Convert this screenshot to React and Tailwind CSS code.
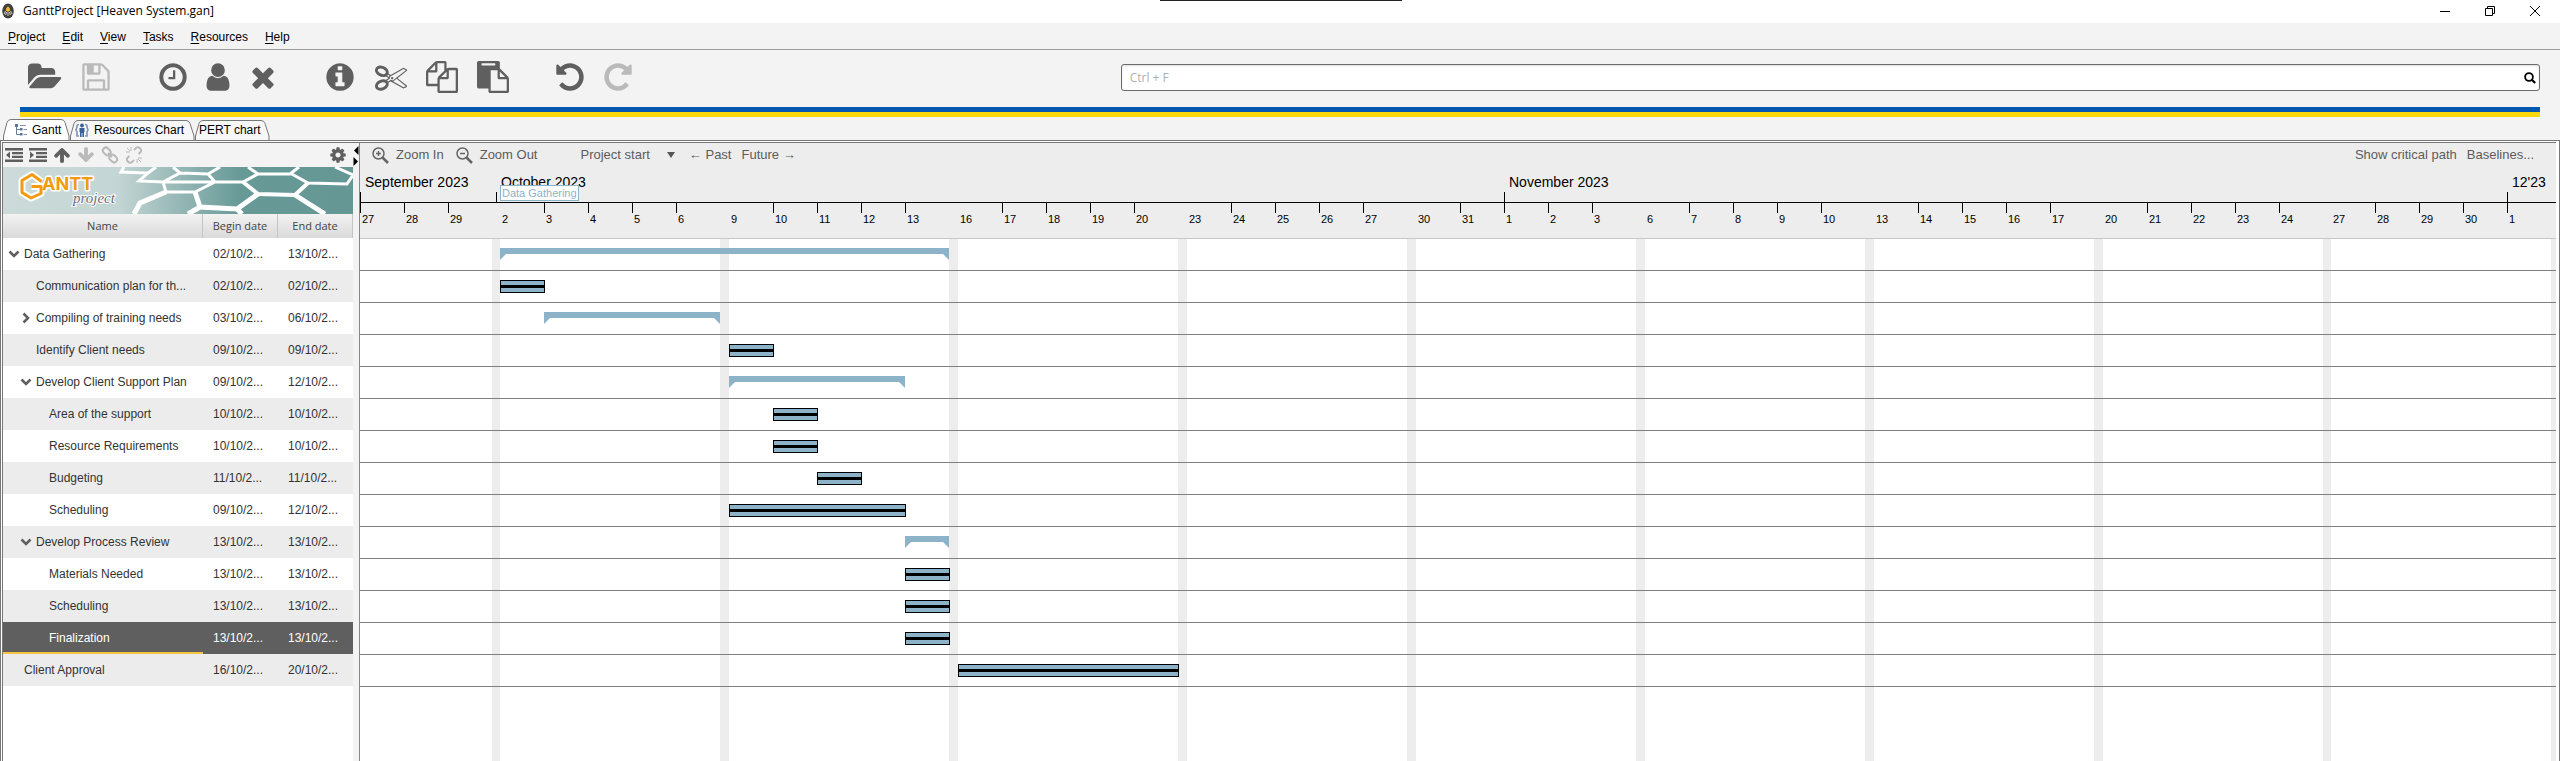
import React from "react";

const PATHS = {
  folder:
    "M1879 952q0 31-31 66l-336 396q-43 51-120.5 86.5t-143.5 35.5h-1088q-34 0-60.5-13t-26.5-43q0-31 31-66l336-396q43-51 120.5-86.5t143.5-35.5h1088q34 0 60.5 13t26.5 43zm-343-344v160h-832q-94 0-197 47.5t-164 119.5l-337 396-5 6q0-4-.5-12.5t-.5-12.5v-960q0-92 66-158t158-66h320q92 0 158 66t66 158v32h544q92 0 158 66t66 158z",
  save: "M512 1536h768v-384h-768v384zm896 0h128v-896q0-14-10-38.5t-20-34.5l-281-281q-10-10-34-20t-39-10v416q0 40-28 68t-68 28h-576q-40 0-68-28t-28-68v-416h-128v1280h128v-416q0-40 28-68t68-28h832q40 0 68 28t28 68v416zm-384-928v-320q0-13-9.5-22.5t-22.5-9.5h-192q-13 0-22.5 9.5t-9.5 22.5v320q0 13 9.5 22.5t22.5 9.5h192q13 0 22.5-9.5t9.5-22.5zm640 32v928q0 40-28 68t-68 28h-1344q-40 0-68-28t-28-68v-1344q0-40 28-68t68-28h928q40 0 88 20t76 48l280 280q28 28 48 76t20 88z",
  clock:
    "M1024 544v448q0 14-9 23t-23 9h-320q-14 0-23-9t-9-23v-64q0-14 9-23t23-9h224v-352q0-14 9-23t23-9h64q14 0 23 9t9 23zm416 352q0-148-73-273t-198-198-273-73-273 73-198 198-73 273 73 273 198 198 273 73 273-73 198-198 73-273zm224 0q0 209-103 385.5t-279.5 279.5-385.5 103-385.5-103-279.5-279.5-103-385.5 103-385.5 279.5-279.5 385.5-103 385.5 103 279.5 279.5 103 385.5z",
  user: "M1536 1399q0 109-62.5 187t-150.5 78h-854q-88 0-150.5-78t-62.5-187q0-85 8.5-160.5t31.5-152 58.5-131 94-89 134.5-34.5q131 128 313 128t313-128q76 0 134.5 34.5t94 89 58.5 131 31.5 152 8.5 160.5zm-256-887q0 159-112.5 271.5t-271.5 112.5-271.5-112.5-112.5-271.5 112.5-271.5 271.5-112.5 271.5 112.5 112.5 271.5z",
  times:
    "M1490 1322q0 40-28 68l-136 136q-28 28-68 28t-68-28l-294-294-294 294q-28 28-68 28t-68-28l-136-136q-28-28-28-68t28-68l294-294-294-294q-28-28-28-68t28-68l136-136q28-28 68-28t68 28l294 294 294-294q28-28 68-28t68 28l136 136q28 28 28 68t-28 68l-294 294 294 294q28 28 28 68z",
  info: "M1152 1376v-160q0-14-9-23t-23-9h-96v-512q0-14-9-23t-23-9h-320q-14 0-23 9t-9 23v160q0 14 9 23t23 9h96v320h-96q-14 0-23 9t-9 23v160q0 14 9 23t23 9h448q14 0 23-9t9-23zm-128-896v-160q0-14-9-23t-23-9h-192q-14 0-23 9t-9 23v160q0 14 9 23t23 9h192q14 0 23-9t9-23zm640 416q0 209-103 385.5t-279.5 279.5-385.5 103-385.5-103-279.5-279.5-103-385.5 103-385.5 279.5-279.5 385.5-103 385.5 103 279.5 279.5 103 385.5z",
  cut: "M960 896q26 0 45 19t19 45-19 45-45 19-45-19-19-45 19-45 45-19zm300 64l507 398q28 20 25 56-5 35-35 51l-128 64q-13 7-29 7-17 0-31-8l-690-387-110 66q-8 4-12 5 14 49 10 97-7 77-56 147.5t-132 123.5q-132 84-277 84-136 0-222-78-90-84-79-207 7-76 56-147t131-124q132-84 278-84 83 0 151 31 9-13 22-22l122-73-122-73q-13-9-22-22-68 31-151 31-146 0-278-84-82-53-131-124t-56-147q-5-59 15.5-113t63.5-93q85-79 222-79 145 0 277 84 83 52 132 123t56 148q4 48-10 97 4 1 12 5l110 66 690-387q14-8 31-8 16 0 29 7l128 64q30 16 35 51 3 36-25 56zm-681-260q46-42 21-108t-106-117q-92-59-192-59-74 0-113 36-46 42-21 108t106 117q92 59 192 59 74 0 113-36zm-85 745q81-51 106-117t-21-108q-39-36-113-36-100 0-192 59-81 51-106 117t21 108q39 36 113 36 100 0 192-59zm178-613l96 58v-11q0-36 33-56l14-8-79-44-26 26q-3 3-10 11t-12 12q-2 2-4 3.5t-3 2.5zm224 224l96 32 736-576-128-64-768 431v113l-160 96 9 8q2 2 7 6 4 4 11 12t11 12l26 26zm704 416l128-64-520-408-177 138q-2 3-13 7z",
  copy: "M1696 384q40 0 68 28t28 68v1216q0 40-28 68t-68 28h-960q-40 0-68-28t-28-68v-288h-544q-40 0-68-28t-28-68v-672q0-40 20-88t48-76l408-408q28-28 76-48t88-20h416q40 0 68 28t28 68v328q68-40 128-40h416zm-544 213l-299 299h299v-299zm-640-384l-299 299h299v-299zm196 647l316-316v-416h-384v416q0 40-28 68t-68 28h-416v640h512v-256q0-40 20-88t48-76zm956 804v-1152h-384v416q0 40-28 68t-68 28h-416v640h896z",
  paste:
    "M768 1664h896v-640h-416q-40 0-68-28t-28-68v-416h-384v1152zm256-1440v-64q0-13-9.5-22.5t-22.5-9.5h-704q-13 0-22.5 9.5t-9.5 22.5v64q0 13 9.5 22.5t22.5 9.5h704q13 0 22.5-9.5t9.5-22.5zm256 672h299l-299-299v299zm512 128v672q0 40-28 68t-68 28h-960q-40 0-68-28t-28-68v-160h-544q-40 0-68-28t-28-68v-1344q0-40 28-68t68-28h1088q40 0 68 28t28 68v328q21 13 36 28l408 408q28 28 48 76t20 88z",
  undo: "M1664 896q0 156-61 298t-164 245-245 164-298 61q-172 0-327-72.5t-264-204.5q-7-10-6.5-22.5t8.5-20.5l137-138q10-9 25-9 16 2 23 12 73 95 179 147t225 52q104 0 198.5-40.5t163.5-109.5 109.5-163.5 40.5-198.5-40.5-198.5-109.5-163.5-163.5-109.5-198.5-40.5q-98 0-188 35.5t-160 101.5l137 138q31 30 14 69-17 40-59 40h-448q-26 0-45-19t-19-45v-448q0-42 40-59 39-17 69 14l130 129q107-101 244.5-156.5t284.5-55.5q156 0 298 61t245 164 164 245 61 298z",
  up: "M1675 971q0 51-37 90l-75 75q-38 38-91 38-54 0-90-38l-294-293v704q0 52-37.5 84.5t-90.5 32.5h-128q-53 0-90.5-32.5t-37.5-84.5v-704l-294 293q-36 38-90 38t-90-38l-75-75q-38-38-38-90 0-53 38-91l651-651q35-37 90-37 54 0 91 37l651 651q37 39 37 91z",
  cog: "M1152 896q0-106-75-181t-181-75-181 75-75 181 75 181 181 75 181-75 75-181zm512-109v222q0 12-8 23t-20 13l-185 28q-19 54-39 91 35 50 107 138 10 12 10 25t-9 23q-27 37-99 108t-94 71q-12 0-26-9l-138-108q-44 23-91 38-16 136-29 186-7 28-36 28h-222q-14 0-24.5-8.5t-11.5-21.5l-28-184q-49-16-90-37l-141 107q-10 9-25 9-14 0-25-11-126-114-165-168-7-10-7-23 0-12 8-23 15-21 51-66.5t54-70.5q-27-50-41-99l-183-27q-13-2-21-12.5t-8-23.5v-222q0-12 8-23t19-13l186-28q14-46 39-92-40-57-107-138-10-12-10-24 0-10 9-23 26-36 98.5-107.5t94.5-71.5q13 0 26 10l138 107q44-23 91-38 16-136 29-186 7-28 36-28h222q14 0 24.5 8.5t11.5 21.5l28 184q49 16 90 37l142-107q9-9 24-9 13 0 25 10 129 119 165 170 7 8 7 22 0 12-8 23-15 21-51 66.5t-54 70.5q26 50 41 98l183 28q13 2 21 12.5t8 23.5z",
};

function Glyph({ name, className = "size-8", box = "0 0 1792 1792" }) {
  return (
    <svg viewBox={box} className={className} fill="currentColor" aria-hidden="true">
      <path d={PATHS[name]} />
    </svg>
  );
}

function IconButton({ label, muted, children }) {
  return (
    <button type="button" aria-label={label} className={muted ? "text-[#bababa]" : "text-[#5f5f5f]"}>
      {children}
    </button>
  );
}

/* ---------- calendar ---------- */

const DAY = 44;
const WEEKS = [
  { days: [27, 28, 29], rest: 8 },
  { days: [2, 3, 4, 5, 6], rest: 9 },
  { days: [9, 10, 11, 12, 13], rest: 9 },
  { days: [16, 17, 18, 19, 20], rest: 9 },
  { days: [23, 24, 25, 26, 27], rest: 9 },
  { days: [30, 31, 1, 2, 3], rest: 9 },
  { days: [6, 7, 8, 9, 10], rest: 9 },
  { days: [13, 14, 15, 16, 17], rest: 9 },
  { days: [20, 21, 22, 23, 24], rest: 8 },
  { days: [27, 28, 29, 30, 1], rest: 9 },
];
const MONTHS = [
  { name: "September 2023", width: 3 * DAY + 4 },
  { name: "October 2023", width: 4 + 22 * DAY + 4 * 9 },
  { name: "November 2023", width: 22 * DAY + 3 * 9 + 8 },
  { name: "12'23", width: 2 * DAY },
];

/* Left edge of a working day: week index and position within the week. */
function dayX(week, day) {
  let x = 0;
  for (let i = 0; i < week; i++) x += WEEKS[i].days.length * DAY + WEEKS[i].rest;
  return x + day * DAY;
}

const TASKS = [
  { name: "Data Gathering", level: 0, open: true, begin: "02/10/2...", end: "13/10/2...", group: true, from: [1, 0], to: [2, 5] },
  { name: "Communication plan for th...", level: 1, begin: "02/10/2...", end: "02/10/2...", from: [1, 0], to: [1, 1] },
  { name: "Compiling of training needs", level: 1, open: false, begin: "03/10/2...", end: "06/10/2...", group: true, from: [1, 1], to: [1, 5] },
  { name: "Identify Client needs", level: 1, begin: "09/10/2...", end: "09/10/2...", from: [2, 0], to: [2, 1] },
  { name: "Develop Client Support Plan", level: 1, open: true, begin: "09/10/2...", end: "12/10/2...", group: true, from: [2, 0], to: [2, 4] },
  { name: "Area of the support", level: 2, begin: "10/10/2...", end: "10/10/2...", from: [2, 1], to: [2, 2] },
  { name: "Resource Requirements", level: 2, begin: "10/10/2...", end: "10/10/2...", from: [2, 1], to: [2, 2] },
  { name: "Budgeting", level: 2, begin: "11/10/2...", end: "11/10/2...", from: [2, 2], to: [2, 3] },
  { name: "Scheduling", level: 2, begin: "09/10/2...", end: "12/10/2...", from: [2, 0], to: [2, 4] },
  { name: "Develop Process Review", level: 1, open: true, begin: "13/10/2...", end: "13/10/2...", group: true, from: [2, 4], to: [2, 5] },
  { name: "Materials Needed", level: 2, begin: "13/10/2...", end: "13/10/2...", from: [2, 4], to: [2, 5] },
  { name: "Scheduling", level: 2, begin: "13/10/2...", end: "13/10/2...", from: [2, 4], to: [2, 5] },
  { name: "Finalization", level: 2, selected: true, begin: "13/10/2...", end: "13/10/2...", from: [2, 4], to: [2, 5] },
  { name: "Client Approval", level: 0, begin: "16/10/2...", end: "20/10/2...", from: [3, 0], to: [3, 5] },
];

/* ---------- window frame ---------- */

function TitleBar() {
  return (
    <header className="relative flex h-[23px] items-center bg-white pb-px pl-0.5 pr-5">
      <div className="absolute left-[1160px] top-0 h-px w-[242px] bg-[#222]" />
      <svg viewBox="0 0 12 16" className="h-4 w-3" aria-hidden="true">
        <ellipse cx="6" cy="8" rx="5.8" ry="7.6" fill="#3f3f3f" />
        <path d="M6 3.2l2 2.2v2.2L6 9 4 7.6V5.4z" fill="#f2b92c" />
        <path d="M3.6 7.8L2 11.2M6 9.4v3.6M8.4 7.8l1.8 3.4M4.6 9l-1 3M7.4 9l1 3" stroke="#e8e3d0" strokeWidth="0.9" fill="none" />
      </svg>
      <h1 className="ml-[9px] font-['Open_Sans','Noto_Sans',sans-serif] text-xs leading-4 text-black">
        GanttProject [Heaven System.gan]
      </h1>
      <div className="ml-auto flex items-center gap-[35px]">
        <button type="button" aria-label="Minimize">
          <svg viewBox="0 0 10 10" className="size-2.5"><path d="M0 5.5h10" stroke="#000" /></svg>
        </button>
        <button type="button" aria-label="Restore">
          <svg viewBox="0 0 10 10" className="size-2.5" fill="none" stroke="#000">
            <path d="M.5 2.5h7v7h-7zM2.5 2.5v-2h7v7h-2" />
          </svg>
        </button>
        <button type="button" aria-label="Close">
          <svg viewBox="0 0 10 10" className="size-2.5"><path d="M0 0l10 10M10 0L0 10" stroke="#000" /></svg>
        </button>
      </div>
    </header>
  );
}

function MenuBar() {
  return (
    <nav className="flex h-[27px] items-center gap-[17px] border-b border-[#999] pl-2 pt-px text-xs text-black">
      {["Project", "Edit", "View", "Tasks", "Resources", "Help"].map((m) => (
        <button key={m} type="button">
          <span className="underline underline-offset-2">{m[0]}</span>
          {m.slice(1)}
        </button>
      ))}
    </nav>
  );
}

function Toolbar() {
  return (
    <div className="flex h-[57px] items-start justify-between pl-7 pr-5">
      <div className="flex gap-[45px] pt-[11px]">
        <div className="flex gap-[18px]">
          <IconButton label="Open"><Glyph name="folder" box="0 0 1920 1792" className="h-8 w-[34px]" /></IconButton>
          <IconButton label="Save" muted><Glyph name="save" /></IconButton>
        </div>
        <div className="flex gap-[13px]">
          <IconButton label="New task"><Glyph name="clock" /></IconButton>
          <IconButton label="New resource"><Glyph name="user" /></IconButton>
          <IconButton label="Delete"><Glyph name="times" /></IconButton>
        </div>
        <div className="flex gap-[19px]">
          <IconButton label="Properties"><Glyph name="info" /></IconButton>
          <IconButton label="Cut"><Glyph name="cut" /></IconButton>
          <IconButton label="Copy"><Glyph name="copy" /></IconButton>
          <IconButton label="Paste"><Glyph name="paste" /></IconButton>
        </div>
        <div className="flex gap-4">
          <IconButton label="Undo"><Glyph name="undo" /></IconButton>
          <IconButton label="Redo" muted><Glyph name="undo" className="size-8 -scale-x-100" /></IconButton>
        </div>
      </div>
      <label className="mt-3.5 flex h-[27px] w-[56.5%] items-center rounded-[3px] border border-[#6b6b6b] bg-white pl-2 pr-[3px] shadow-[inset_0_1px_2px_#ddd]">
        <input
          type="search"
          aria-label="Search"
          placeholder="Ctrl + F"
          className="min-w-0 flex-1 bg-transparent font-['Open_Sans','Noto_Sans',sans-serif] text-xs outline-none placeholder:text-[#b0b0b0]"
        />
        <svg viewBox="0 0 12 12" className="size-3" fill="none" stroke="#000" strokeWidth="1.8" aria-hidden="true">
          <circle cx="5" cy="5" r="3.9" />
          <path d="M7.8 7.8l3.4 3.2" strokeWidth="2.2" />
        </svg>
      </label>
    </div>
  );
}

function Tab({ width, label, active, icon, className }) {
  const top = active ? 0.5 : 1.5;
  return (
    <button type="button" role="tab" aria-selected={!!active} className={"relative flex h-[21px] items-center text-xs text-black " + className}>
      <svg viewBox={`0 0 ${width} 21`} preserveAspectRatio="none" className="absolute inset-0 size-full" aria-hidden="true">
        <path
          d={`M.5 21V17L4 ${top + 3}Q5 ${top} 8 ${top}H${width - 9}Q${width - 6} ${top} ${width - 5} ${top + 3}L${width - 1} 17V21`}
          fill={active ? "#fff" : "#f7f7f7"}
          stroke="#777"
        />
      </svg>
      <span className="relative flex items-center gap-[5px]">
        {icon}
        {label}
      </span>
    </button>
  );
}

function Tabs() {
  return (
    <div role="tablist" className="flex items-end pl-[3px] pt-0.5">
      <Tab
        width={67}
        label="Gantt"
        active
        className="w-[67px] pl-3"
        icon={
          <svg viewBox="0 0 12 12" className="size-3" aria-hidden="true">
            <path d="M1.5 3v7.5h4M1.5 5.5h4" stroke="#6a7f9c" fill="none" />
            <path d="M0 0h3v3H0zM5 4h2.500v2.500H5zM5 9h2.500v2.500H5z" fill="#56779f" />
            <path d="M5 1.500h6M8.500 5.500H12M8.500 10.500H12" stroke="#8293a8" />
          </svg>
        }
      />
      <Tab
        width={125}
        label="Resources Chart"
        className="w-[125px] pl-[5px]"
        icon={
          <svg viewBox="0 0 14 14" className="size-3.5" aria-hidden="true">
            <path d="M4 1.500Q1.500 1.500 2 4l-1 3 1 2v4h2M10 1.500q2.500 0 2 2.500l1 3-1 2v4h-2" stroke="#7d93b5" strokeWidth="1.600" fill="none" />
            <circle cx="7" cy="2.500" r="1.900" fill="#3c5f96" />
            <path d="M4.500 5h5v4H9v5H7.400v-4h-.8v4H5V9h-.5z" fill="#3c5f96" />
          </svg>
        }
      />
      <Tab width={75} label="PERT chart" className="w-[75px] pl-1" />
    </div>
  );
}

/* ---------- task tree ---------- */

function TreeToolbar() {
  return (
    <div className="flex h-6 items-center gap-1.5 pl-0.5 pr-1.5">
      {["Outdent", "Indent"].map((label) => (
        <IconButton key={label} label={label}>
          <svg viewBox="0 0 18 14" className="h-3.5 w-[18px]" fill="currentColor" aria-hidden="true">
            <path d="M0 0h18v2.500H0zM7 4h11v2.200H7zM7 7.800h11V10H7zM0 11.500h18V14H0z" />
            <path d={label === "Outdent" ? "M5 3.500v7L1 7z" : "M1 3.500v7L5 7z"} />
          </svg>
        </IconButton>
      ))}
      <IconButton label="Move up"><Glyph name="up" className="size-[18px]" /></IconButton>
      <IconButton label="Move down" muted><Glyph name="up" className="size-[18px] rotate-180" /></IconButton>
      <IconButton label="Link tasks" muted>
        <svg viewBox="0 0 18 18" className="size-[18px]" fill="none" stroke="currentColor" strokeWidth="2" aria-hidden="true">
          <rect x="1.500" y="2.500" width="8.500" height="6" rx="3" transform="rotate(45 5.800 5.500)" />
          <rect x="8" y="9.500" width="8.500" height="6" rx="3" transform="rotate(45 12.200 12.500)" />
          <path d="M7 7l4 4" />
        </svg>
      </IconButton>
      <IconButton label="Unlink tasks" muted>
        <svg viewBox="0 0 18 18" className="size-[18px]" fill="none" stroke="currentColor" strokeWidth="2" aria-hidden="true">
          <path d="M9 4l2-2q2-1.500 4 .3t.4 4L13.500 8M9 14l-2 2q-2 1.500-4-.3t-.4-4L4.500 10" />
          <path d="M6 1v4M1 6h4M2 2l3 3M12 13v4M13 12h4M13 13l3 3" strokeWidth="1" />
        </svg>
      </IconButton>
      <div className="ml-auto flex">
        <IconButton label="Table settings"><Glyph name="cog" className="size-[18px]" /></IconButton>
      </div>
    </div>
  );
}

function Banner() {
  return (
    <svg viewBox="0 0 350 47" className="block h-[47px] w-full" role="img" aria-label="GanttProject">
      <defs>
        <linearGradient id="sea" x1="0" x2="1" y1="0" y2="0">
          <stop offset="0" stopColor="#ccdbda" />
          <stop offset="0.33" stopColor="#c3d5d4" />
          <stop offset="0.68" stopColor="#679997" />
          <stop offset="1" stopColor="#659795" />
        </linearGradient>
      </defs>
      <rect width="350" height="47" fill="url(#sea)" />
      <g fill="none" stroke="#fff" strokeWidth="3">
        <path d="M121 0l-3 5 27 1-9 8 24 1 17-9 28 1 12-7M145 6l8-6M177 6l-7-6M205 7l7 8-52 0 3 10 29 0 20-10h28l15-8-10-7M255 7h32l9-7M287 6l18 10 39 1 6-9-18-8" />
        <path d="M240 15l15 12 37 1 13-12" strokeWidth="4" />
        <path d="M192 25l5 15 37 2 21-15M292 28l30 19M234 42l5 5M197 40l-12 7M163 25l-26 11-6 11" strokeWidth="5" />
      </g>
      <g strokeLinejoin="round">
        <path d="M38.500 14.500L29 7.500l-10 6v12l9 5.500 10-4.500v-7H28.500" fill="none" stroke="#fff" strokeWidth="7" />
        <text x="39" y="23" fontFamily="Inter, sans-serif" fontWeight="700" fontSize="18" fill="#f39a10" stroke="#fff" strokeWidth="3" paintOrder="stroke">
          ANTT
        </text>
        <path d="M38.500 14.500L29 7.500l-10 6v12l9 5.500 10-4.500v-7H28.500" fill="none" stroke="#f39a10" strokeWidth="3" />
        <text x="70" y="36" fontFamily="'Liberation Serif', serif" fontStyle="italic" fontSize="15" fill="#6d6d75" stroke="#fff" strokeWidth="2" paintOrder="stroke">
          project
        </text>
      </g>
    </svg>
  );
}

const INDENT = ["pl-[5px]", "pl-[17px]", "pl-[30px]"];

function TaskTable() {
  const th = "border-r border-[#c4c4c4] bg-linear-to-b from-[#f2f2f2] to-[#dadada] p-0 text-center font-normal text-[#444]";
  return (
    <table className="w-full table-fixed border-separate border-spacing-0 text-xs text-[#333]">
      <colgroup>
        <col />
        <col className="w-[75px]" />
        <col className="w-[75px]" />
      </colgroup>
      <thead>
        <tr className="h-6 font-['Open_Sans','Noto_Sans',sans-serif] text-[11px]">
          <th className={th}>Name</th>
          <th className={th}>Begin date</th>
          <th className={th}>End date</th>
        </tr>
      </thead>
      <tbody>
        {TASKS.map((t, i) => (
          <tr key={i} className={"h-8 " + (t.selected ? "bg-[#5f5f5f] text-white" : i % 2 ? "bg-[#ececec]" : "bg-white")}>
            <td className={"p-0 whitespace-nowrap " + (t.selected ? "shadow-[inset_0_-2px_#f5c542]" : "")}>
              <div className={"flex items-center " + INDENT[t.level]}>
                <span className="flex w-4 justify-start">
                  {t.open !== undefined && (
                    <button type="button" aria-label={t.open ? "Collapse" : "Expand"} aria-expanded={t.open}>
                      <svg viewBox="0 0 12 12" className={"size-3 " + (t.open ? "" : "-rotate-90")} fill="none" stroke="#5f5f5f" strokeWidth="2.500" aria-hidden="true">
                        <path d="M1.500 3.500L6 8l4.500-4.500" />
                      </svg>
                    </button>
                  )}
                </span>
                {t.name}
              </div>
            </td>
            <td className="p-0 pl-2.5">{t.begin}</td>
            <td className="p-0 pl-2.5">{t.end}</td>
          </tr>
        ))}
      </tbody>
    </table>
  );
}

/* ---------- chart ---------- */

function ZoomGlyph({ plus }) {
  return (
    <svg viewBox="0 0 17 17" className="size-[17px]" fill="none" stroke="#666" strokeWidth="1.500" aria-hidden="true">
      <circle cx="6.500" cy="6.500" r="5.500" />
      <path d="M10.500 10.500l5.500 5.500" strokeWidth="2.500" />
      <path d={plus ? "M4 6.500h5M6.500 4v5" : "M4 6.500h5"} />
    </svg>
  );
}

function ChartToolbar() {
  return (
    <div className="flex h-6 items-center pl-3 pr-[22px] text-[13px] text-[#5c5c5c]">
      <button type="button" className="flex items-center gap-[7px]"><ZoomGlyph plus />Zoom In</button>
      <button type="button" className="ml-3 flex items-center gap-[7px]"><ZoomGlyph />Zoom Out</button>
      <button type="button" className="ml-[43px] flex items-center gap-[17px]">
        Project start
        <svg viewBox="0 0 8 6" className="h-1.5 w-2" fill="#555" aria-hidden="true"><path d="M0 0h8L4 6z" /></svg>
      </button>
      <button type="button" className="ml-3.5">← Past</button>
      <button type="button" className="ml-2.5">Future →</button>
      <button type="button" className="ml-auto">Show critical path</button>
      <button type="button" className="ml-2.5">Baselines...</button>
    </div>
  );
}

function Timeline() {
  return (
    <div className="relative h-[72px] overflow-hidden border-b border-[#c8c8c8] text-black">
      <div className="flex h-[36px] border-b border-black">
        {MONTHS.map((m) => (
          <div key={m.name} className="flex shrink-0 items-end" style={{ width: m.width }}>
            <div className="h-2.5 w-px bg-black" />
            <span className="self-start pl-1 pt-[7px] text-sm leading-4">{m.name}</span>
          </div>
        ))}
      </div>
      <div className="flex">
        {WEEKS.map((w, wi) => (
          <React.Fragment key={wi}>
            {w.days.map((d, i) => (
              <div key={i} className="w-11 shrink-0">
                <div className={"h-2.5 w-px " + (i > 0 || wi === 0 ? "bg-black" : "")} />
                <div className="pl-[2px] text-[11px] leading-3">{d}</div>
              </div>
            ))}
            <div className="shrink-0" style={{ width: w.rest }} />
          </React.Fragment>
        ))}
      </div>
      <div
        className="absolute top-[18px] flex h-4 items-center border border-[#8db3c9] bg-white px-px text-[11px] leading-3 text-[#8db3c9]"
        style={{ left: dayX(1, 0) }}
      >
        Data Gathering
      </div>
    </div>
  );
}

function Bar({ task }) {
  const left = dayX(...task.from);
  const width = dayX(...task.to) - left;
  if (task.group) {
    return (
      <div className="absolute top-[9px] flex h-3 items-start" style={{ left, width }}>
        <svg viewBox="0 0 6 12" className="h-3 w-1.5 shrink-0" fill="#8db3c9" aria-hidden="true"><path d="M0 0h6v6L0 12z" /></svg>
        <div className="h-1.5 flex-1 bg-[#8db3c9]" />
        <svg viewBox="0 0 6 12" className="h-3 w-1.5 shrink-0" fill="#8db3c9" aria-hidden="true"><path d="M0 0h6v12L0 6z" /></svg>
      </div>
    );
  }
  return (
    <div className="absolute top-[9px] flex h-[13px] items-center border border-black bg-[#8db3c9]" style={{ left, width: width + 1 }}>
      <div className="h-[3px] w-full bg-black" />
    </div>
  );
}

function Chart() {
  return (
    <section className="flex min-w-0 flex-1 flex-col overflow-hidden border-l border-[#888] bg-[#ededed]">
      <ChartToolbar />
      <Timeline />
      <div className="relative flex-1 overflow-hidden bg-white">
        <div className="absolute inset-0 flex">
          {WEEKS.map((w, i) => (
            <React.Fragment key={i}>
              <div className="shrink-0" style={{ width: w.days.length * DAY }} />
              <div className="shrink-0 bg-[#ededed]" style={{ width: w.rest }} />
            </React.Fragment>
          ))}
        </div>
        {TASKS.map((t, i) => (
          <div key={i} className="relative h-8 border-b border-[#808080]">
            <Bar task={t} />
          </div>
        ))}
      </div>
    </section>
  );
}

export default function App() {
  return (
    <div className="flex min-h-screen flex-col bg-[#f3f3f3] font-['Liberation_Sans',Arial,sans-serif]">
      <TitleBar />
      <MenuBar />
      <Toolbar />
      <div className="mx-5 h-[5px] shrink-0 bg-[#0057b0]" />
      <div className="mx-5 h-[5px] shrink-0 bg-[#fbd70c]" />
      <Tabs />
      <main className="flex flex-1 flex-col border-x border-t border-[#777] bg-white pl-px pr-[3px] pt-px">
        <div className="flex flex-1 border-l border-t border-[#777]">
          <section className="w-[350px] shrink-0 bg-white">
            <div className="bg-[#f3f3f3]"><TreeToolbar /></div>
            <Banner />
            <TaskTable />
          </section>
          <div className="flex w-1.5 shrink-0 flex-col items-center bg-[#f3f3f3] pt-[3px]">
            <svg viewBox="0 0 6 20" className="h-5 w-1.5" aria-hidden="true">
              <path d="M5.500 0v9L1 4.500zM.5 11v9L5 15.500z" fill="#000" />
            </svg>
          </div>
          <Chart />
        </div>
      </main>
    </div>
  );
}
